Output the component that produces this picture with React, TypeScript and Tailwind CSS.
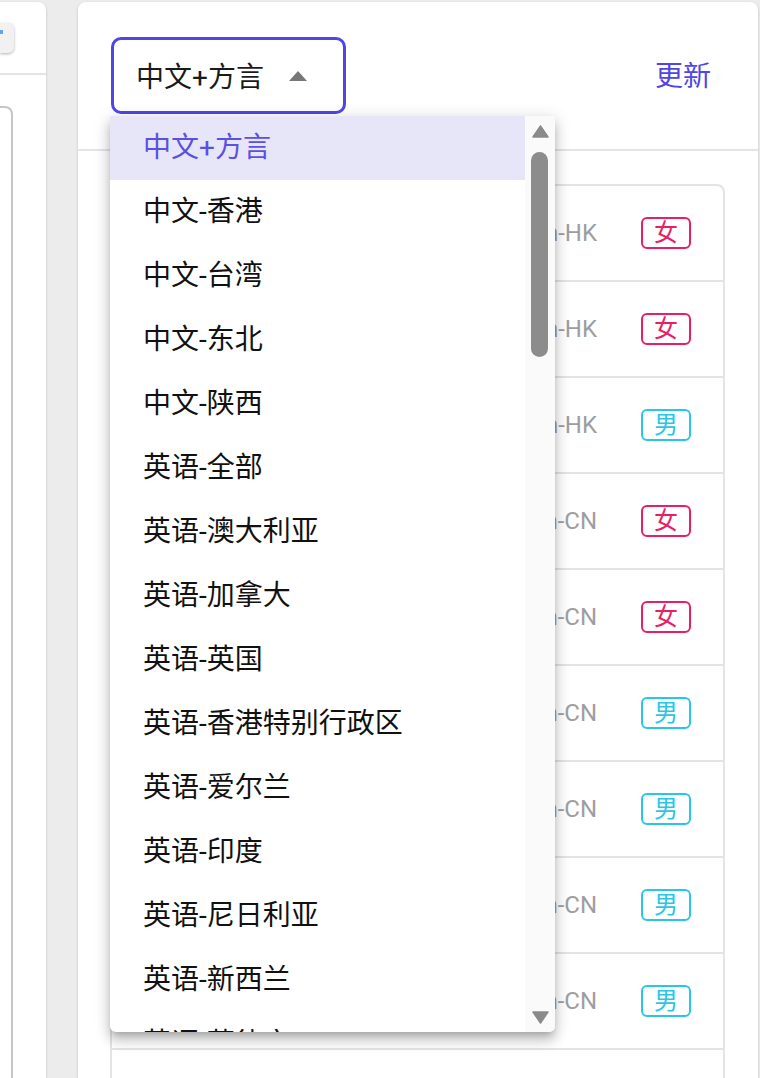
import React from "react";

const FONT = { fontFamily: "Roboto, 'Noto Sans CJK SC', sans-serif" };

const items = [
  "中文+方言",
  "中文-香港",
  "中文-台湾",
  "中文-东北",
  "中文-陕西",
  "英语-全部",
  "英语-澳大利亚",
  "英语-加拿大",
  "英语-英国",
  "英语-香港特别行政区",
  "英语-爱尔兰",
  "英语-印度",
  "英语-尼日利亚",
  "英语-新西兰",
  "英语-菲律宾",
];

const rows: { code: string; g: "女" | "男" | "" }[] = [
  { code: "zh-HK", g: "女" },
  { code: "zh-HK", g: "女" },
  { code: "zh-HK", g: "男" },
  { code: "zh-CN", g: "女" },
  { code: "zh-CN", g: "女" },
  { code: "zh-CN", g: "男" },
  { code: "zh-CN", g: "男" },
  { code: "zh-CN", g: "男" },
  { code: "zh-CN", g: "男" },
  { code: "", g: "" },
];

export default function App() {
  return (
    <div
      className="flex h-[1078px] w-[760px] gap-[32px] overflow-hidden bg-[#ececec] pt-[2px]"
      style={FONT}
    >
      {/* left panel (partially visible) */}
      <div className="flex w-[46px] shrink-0 flex-col rounded-tr-[8px] bg-white shadow-[0_1px_3px_rgba(0,0,0,0.18)]">
        <div className="h-[73px] shrink-0 border-b-2 border-[#e4e4e4] pt-[21px]">
          <div className="relative h-[30px] w-[14px] rounded-r-[6px] bg-[#f1f1f1] shadow-[0_1px_3px_rgba(0,0,0,0.3)]">
            <div className="absolute left-0 top-[7px] h-[4px] w-[3px] bg-[#6aa0e6]" />
          </div>
        </div>
        <div className="pt-[31px]">
          <div className="h-[980px] w-[13px] rounded-tr-[8px] border-r-2 border-t-2 border-[#c6c6c6]" />
        </div>
      </div>

      {/* right panel */}
      <div className="flex w-[680px] shrink-0 flex-col rounded-t-[8px] bg-white shadow-[0_1px_3px_rgba(0,0,0,0.18)]">
        {/* header */}
        <div className="flex h-[149px] shrink-0 items-start justify-between border-b-2 border-[#e4e4e4] pl-[33px] pr-[47px] pt-[35px]">
          <div className="relative z-10">
            <div className="flex h-[77px] w-[235px] items-center justify-between rounded-[10px] border-[3px] border-[#4f46e5] pl-[22px] pr-[36px]">
              <span className="pt-[4px] text-[28px] leading-none text-[#1a1a1a]">中文+方言</span>
              <svg width="18" height="10" viewBox="0 0 18 10">
                <path d="M9 0 L18 10 L0 10 Z" fill="#777777" />
              </svg>
            </div>
            {/* dropdown menu */}
            <div className="absolute left-[-1px] top-[79px] flex h-[916px] w-[445px] overflow-hidden rounded-b-[6px] bg-white shadow-[0_5px_6px_-3px_rgba(0,0,0,0.2),0_9px_12px_1px_rgba(0,0,0,0.14),0_3px_16px_2px_rgba(0,0,0,0.12)]">
              <div className="flex w-[415px] flex-col">
                {items.map((t, i) => (
                  <div
                    key={t}
                    className={
                      i === 0
                        ? "flex h-[64px] shrink-0 items-center bg-[#e7e5f8] pl-[33px] text-[28px] text-[#5a51e2]"
                        : "flex h-[64px] shrink-0 items-center pl-[33px] text-[28px] text-[#111111]"
                    }
                  >
                    {t}
                  </div>
                ))}
              </div>
              <div className="relative w-[30px] bg-[#fafafa]">
                <svg className="absolute left-[7px] top-[9px]" width="17" height="13" viewBox="0 0 17 13">
                  <path d="M8.5 1 L16 12 L1 12 Z" fill="#8a8a8a" stroke="#8a8a8a" strokeWidth="1.5" strokeLinejoin="round" />
                </svg>
                <div className="absolute left-[6px] top-[36px] h-[205px] w-[17px] rounded-full bg-[#8c8c8c]" />
                <svg className="absolute bottom-[8px] left-[7px]" width="17" height="13" viewBox="0 0 17 13">
                  <path d="M1 1 L16 1 L8.5 12 Z" fill="#8a8a8a" stroke="#8a8a8a" strokeWidth="1.5" strokeLinejoin="round" />
                </svg>
              </div>
            </div>
          </div>
          <button className="mt-[26px] text-[28px] leading-none text-[#4f46e5]">更新</button>
        </div>

        {/* content */}
        <div className="pl-[32px] pr-[33px] pt-[33px]">
          <div className="flex flex-col rounded-t-[8px] border-2 border-[#e4e4e4]">
            {rows.map((r, i) => (
              <div
                key={i}
                className="flex h-[96px] shrink-0 items-center justify-end border-b-2 border-[#e4e4e4] pr-[32px]"
              >
                {r.g !== "" && (
                  <div className="flex items-center gap-[44px]">
                    <span className="text-[24px] text-[#9e9e9e]">{r.code}</span>
                    <span
                      className={
                        r.g === "女"
                          ? "flex h-[32px] w-[50px] items-center justify-center rounded-[6px] border-2 border-[#e91e63] text-[24px] leading-none text-[#e91e63]"
                          : "flex h-[32px] w-[50px] items-center justify-center rounded-[6px] border-2 border-[#2ac6e8] text-[24px] leading-none text-[#2ac6e8]"
                      }
                    >
                      {r.g}
                    </span>
                  </div>
                )}
              </div>
            ))}
          </div>
        </div>
      </div>
    </div>
  );
}
